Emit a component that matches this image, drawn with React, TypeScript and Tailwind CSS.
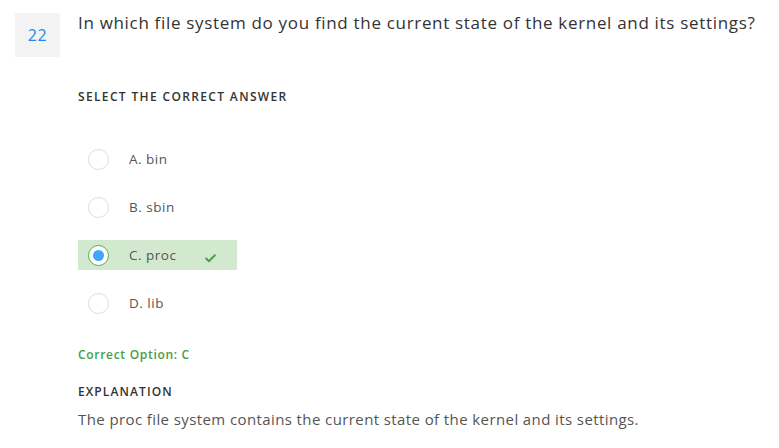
import { Check } from "lucide-react";

const options = [
  { key: "A", label: "bin" },
  { key: "B", label: "sbin" },
  { key: "C", label: "proc" },
  { key: "D", label: "lib" },
];

const correct = "C";

function Radio({ checked }: { checked: boolean }) {
  return (
    <span
      className={
        "flex h-[21px] w-[21px] items-center justify-center rounded-full border " +
        (checked ? "border-[#4caf50] bg-white" : "border-[#dcdcdc] bg-white")
      }
    >
      {checked && <span className="h-[11px] w-[11px] rounded-full bg-[#42a5f5]" />}
    </span>
  );
}

export default function App() {
  return (
    <div className="min-h-screen w-full bg-white font-['Open_Sans','Noto_Sans',sans-serif] text-[#333]">
      <div className="flex gap-[18px] pl-[15px] pt-[13px]">
        <div className="flex h-[44px] w-[45px] shrink-0 items-center justify-center bg-[#f3f3f3] text-[16px] tracking-[0.5px] text-[#1e88e5]">
          22
        </div>
        <div className="flex flex-col">
          <h1 className="whitespace-nowrap text-[17px] leading-[20px] tracking-[0.68px] text-[#333]">
            In which file system do you find the current state of the kernel and its settings?
          </h1>
          <p className="mt-[56px] text-[12px] leading-[16px] font-semibold tracking-[1.35px] text-[#333]">
            SELECT THE CORRECT ANSWER
          </p>

          <ul className="mt-[39px] flex flex-col gap-[18px]">
            {options.map((o) => {
              const isCorrect = o.key === correct;
              return (
                <li
                  key={o.key}
                  className={
                    "flex h-[30px] w-[159px] items-center pl-[10px] " +
                    (isCorrect ? "bg-[#d3e9cf]" : "")
                  }
                >
                  <Radio checked={isCorrect} />
                  <span className="ml-[20px] text-[13.5px] leading-[16px] tracking-[0.5px] text-[#555]">
                    {o.key}. {o.label}
                  </span>
                  {isCorrect && (
                    <Check className="ml-[28px] mt-[6px] h-[13px] w-[13px] text-[#43a047]" strokeWidth={3.5} />
                  )}
                </li>
              );
            })}
          </ul>

          <p className="mt-[29px] text-[12px] leading-[16px] font-semibold tracking-[0.7px] text-[#43a047]">
            Correct Option: C
          </p>
          <p className="mt-[21px] text-[12px] leading-[16px] font-semibold tracking-[1.1px] text-[#333]">
            EXPLANATION
          </p>
          <p className="mt-[9px] text-[15px] leading-[20px] tracking-[0.4px] text-[#555]">
            The proc file system contains the current state of the kernel and its settings.
          </p>
        </div>
      </div>
    </div>
  );
}
